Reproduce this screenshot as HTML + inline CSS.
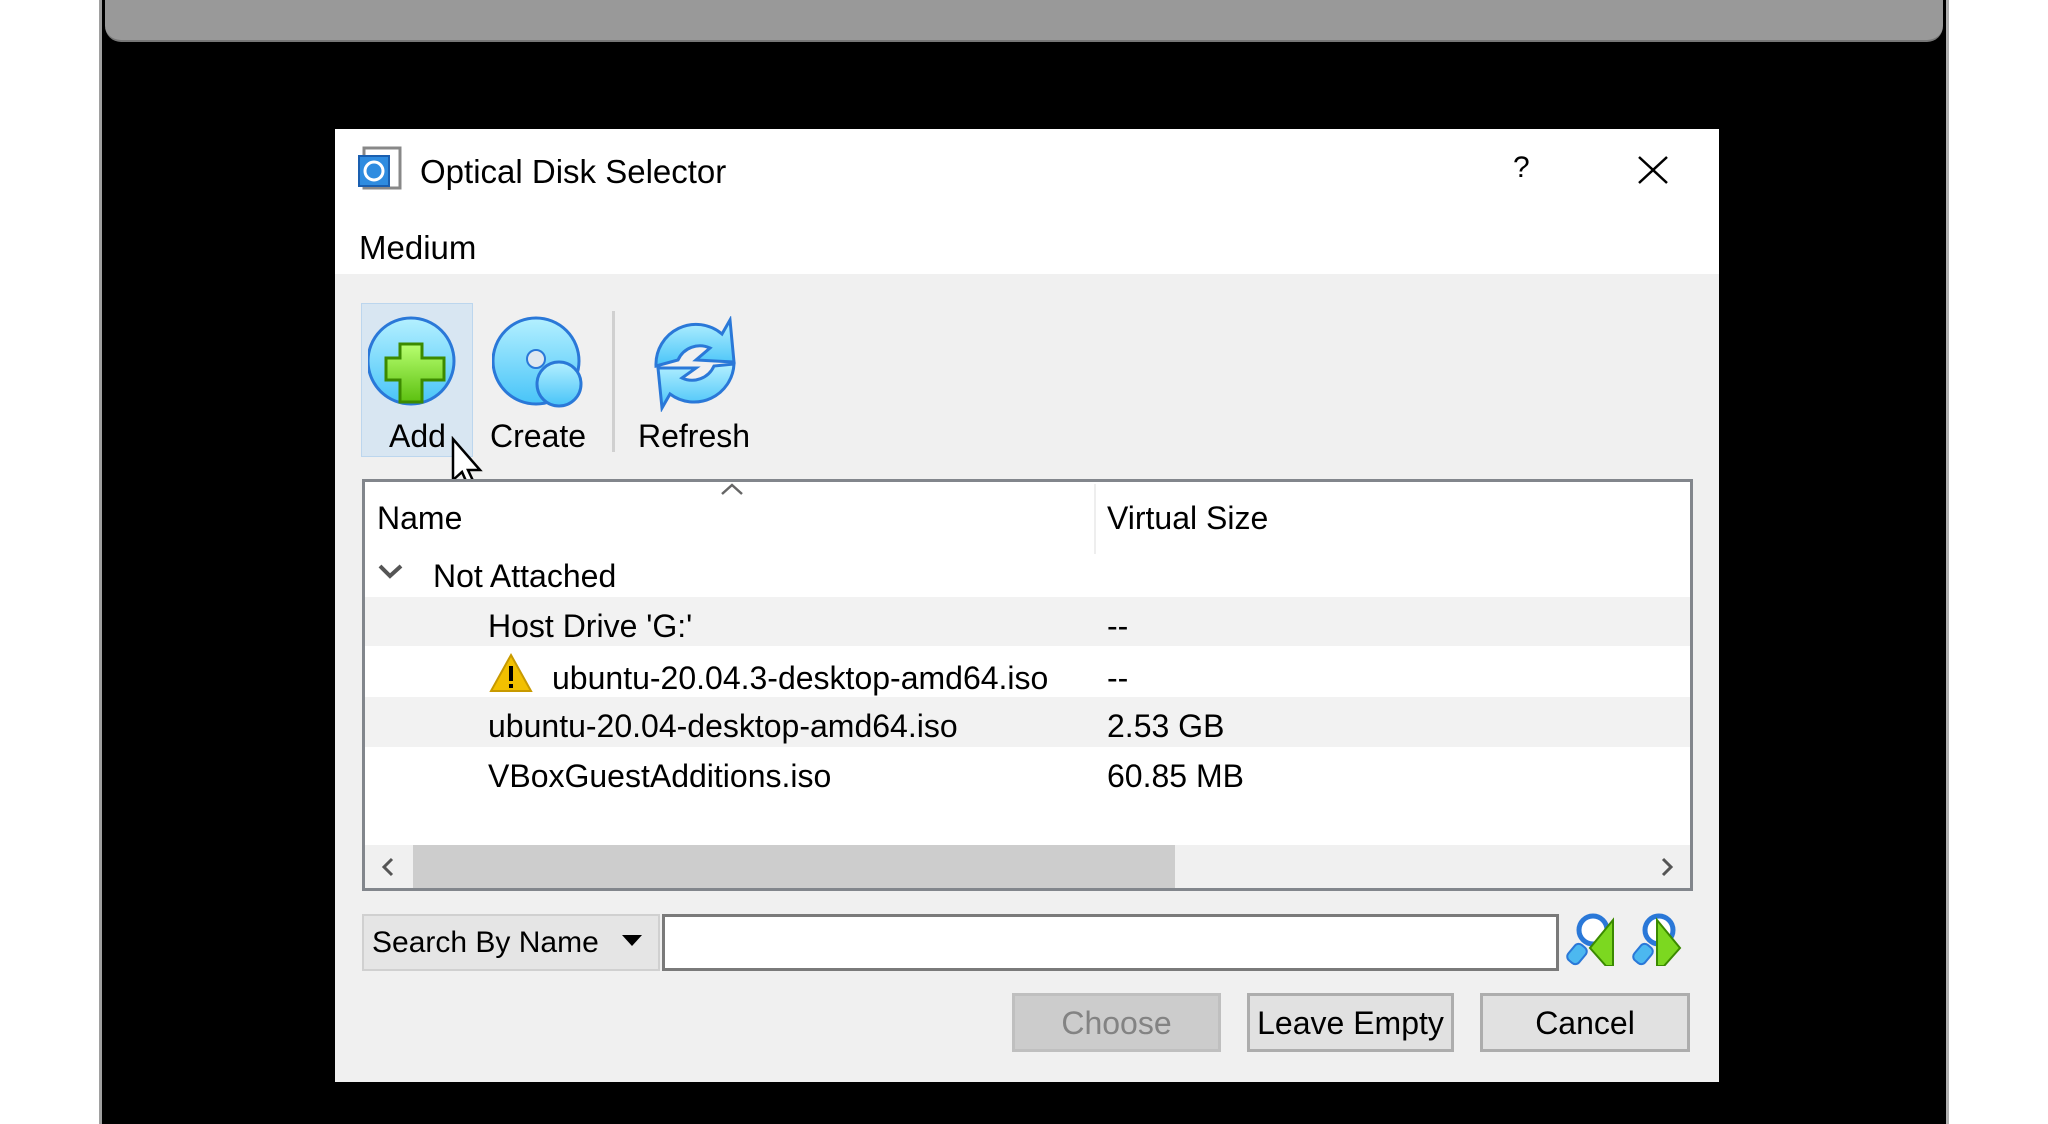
<!DOCTYPE html>
<html><head><meta charset="utf-8"><style>
*{margin:0;padding:0;box-sizing:border-box}
body{width:2048px;height:1124px;background:#fff;position:relative;overflow:hidden;font-family:"Liberation Sans",sans-serif;color:#000}
.a{position:absolute}
.t{position:absolute;font-size:32px;white-space:nowrap;line-height:1}
</style></head><body>
<div class="a" style="left:99px;top:0;width:1850px;height:1124px;background:#000"></div>
<div class="a" style="left:99px;top:0;width:3px;height:1124px;background:#a0a0a0"></div>
<div class="a" style="left:1946px;top:0;width:3px;height:1124px;background:#b0b0b0"></div>
<div class="a" style="left:105px;top:0;width:1838px;height:42px;background:#999;border-bottom:2px solid #777;border-radius:0 0 16px 16px"></div>

<!-- dialog -->
<div class="a" style="left:335px;top:129px;width:1384px;height:953px;background:#f0f0f0"></div>
<div class="a" style="left:335px;top:129px;width:1384px;height:145px;background:#fff"></div>
<svg class="a" style="left:357px;top:146px" width="46" height="46" viewBox="0 0 46 46">
<rect x="7" y="2" width="36" height="40" fill="#fff" stroke="#888" stroke-width="3"/>
<rect x="2" y="10" width="30" height="30" fill="#2f8ce0" stroke="#1a5fb0" stroke-width="2"/>
<circle cx="17" cy="25" r="9" fill="none" stroke="#fff" stroke-width="3"/></svg>
<div class="t" style="left:420px;top:155px;font-size:33px">Optical Disk Selector</div>
<div class="t" style="left:1513px;top:153px;font-size:30px">?</div>
<svg class="a" style="left:1637px;top:155px" width="32" height="30"><path d="M2 2L30 28M30 2L2 28" stroke="#000" stroke-width="2.5"/></svg>
<div class="t" style="left:359px;top:231px;font-size:33px">Medium</div>

<!-- toolbar -->
<div class="a" style="left:361px;top:303px;width:112px;height:154px;background:#d8e6f2;border:1px solid #bcd6ee"></div>
<svg class="a" style="left:368px;top:316px" width="100" height="96" viewBox="0 0 100 96">
<defs><linearGradient id="g" x1="0" y1="0" x2="0" y2="1"><stop offset="0" stop-color="#b4f0ff"/><stop offset="1" stop-color="#48c4f8"/></linearGradient>
<linearGradient id="gg" x1="0" y1="0" x2="0" y2="1"><stop offset="0" stop-color="#b8ff70"/><stop offset="1" stop-color="#5cc010"/></linearGradient></defs>
<ellipse cx="43" cy="45" rx="43" ry="43" fill="url(#g)" stroke="#2a78d8" stroke-width="3"/>
<path d="M50 58h22v-22h-22v-14h-22v14h-14v22h14v22h22z" transform="translate(4 6)" fill="url(#gg)" stroke="#3c8a00" stroke-width="3"/>
</svg>
<svg class="a" style="left:492px;top:316px" width="96" height="96" viewBox="0 0 96 96">
<ellipse cx="44" cy="45" rx="43" ry="43" fill="url(#g)" stroke="#2a78d8" stroke-width="3"/>
<circle cx="44" cy="43" r="9" fill="#e0e8f0" stroke="#2a78d8" stroke-width="2"/>
<circle cx="67" cy="68" r="22" fill="url(#g)" stroke="#2a78d8" stroke-width="3"/>
</svg>
<div class="a" style="left:612px;top:311px;width:3px;height:141px;background:#d0d0d0"></div>
<svg class="a" style="left:652px;top:316px" width="90" height="96" viewBox="0 0 90 96">
<path d="M4 50 A40 40 0 0 1 70 18 L78 4 L82 46 L44 44 L58 32 A24 24 0 0 0 26 44 Z" fill="url(#g)" stroke="#2a78d8" stroke-width="3"/>
<path d="M82 48 A40 40 0 0 1 18 78 L10 92 L6 52 L44 52 L30 62 A24 24 0 0 0 62 50 Z" fill="url(#g)" stroke="#2a78d8" stroke-width="3"/>
</svg>
<div class="t" style="left:389px;top:420px">Add</div>
<div class="t" style="left:490px;top:420px">Create</div>
<div class="t" style="left:638px;top:420px">Refresh</div>
<svg class="a" style="left:450px;top:436px" width="40" height="60"><path d="M3 3V44L12 36L20 54L26 51L18 34H30Z" fill="#fff" stroke="#000" stroke-width="2.5"/></svg>

<!-- list -->
<div class="a" style="left:362px;top:479px;width:1331px;height:412px;background:#fff;border:3px solid #82868c"></div>
<svg class="a" style="left:719px;top:481px" width="26" height="16"><path d="M3 13L13 4L23 13" fill="none" stroke="#666" stroke-width="2.5"/></svg>
<div class="t" style="left:377px;top:502px">Name</div>
<div class="a" style="left:1094px;top:484px;width:2px;height:70px;background:#eee"></div>
<div class="t" style="left:1107px;top:502px">Virtual Size</div>
<svg class="a" style="left:377px;top:562px" width="28" height="20"><path d="M3 4L13 14L24 4" fill="none" stroke="#555" stroke-width="4"/></svg>
<div class="t" style="left:433px;top:560px">Not Attached</div>
<div class="a" style="left:365px;top:597px;width:1325px;height:49px;background:#f2f2f2"></div>
<div class="a" style="left:365px;top:697px;width:1325px;height:50px;background:#f2f2f2"></div>
<div class="t" style="left:488px;top:610px">Host Drive 'G:'</div>
<div class="t" style="left:1107px;top:610px">--</div>
<svg class="a" style="left:488px;top:652px" width="46" height="42"><path d="M23 3L43 39H3Z" fill="#f2c000" stroke="#c89a00" stroke-width="2"/><rect x="21" y="14" width="4" height="15" fill="#000"/><rect x="21" y="32" width="4" height="4" fill="#000"/></svg>
<div class="t" style="left:552px;top:662px">ubuntu-20.04.3-desktop-amd64.iso</div>
<div class="t" style="left:1107px;top:662px">--</div>
<div class="t" style="left:488px;top:710px">ubuntu-20.04-desktop-amd64.iso</div>
<div class="t" style="left:1107px;top:710px">2.53 GB</div>
<div class="t" style="left:488px;top:760px">VBoxGuestAdditions.iso</div>
<div class="t" style="left:1107px;top:760px">60.85 MB</div>
<div class="a" style="left:365px;top:845px;width:1325px;height:43px;background:#f0f0f0"></div>
<div class="a" style="left:413px;top:845px;width:762px;height:43px;background:#cdcdcd"></div>
<svg class="a" style="left:378px;top:856px" width="20" height="22"><path d="M14 3L6 11L14 19" fill="none" stroke="#555" stroke-width="3"/></svg>
<svg class="a" style="left:1657px;top:856px" width="20" height="22"><path d="M6 3L14 11L6 19" fill="none" stroke="#555" stroke-width="3"/></svg>

<!-- search -->
<div class="a" style="left:362px;top:914px;width:298px;height:57px;background:#e5e5e5;border:2px solid #d0d0d0"></div>
<div class="t" style="left:372px;top:928px;font-size:30px">Search By Name</div>
<svg class="a" style="left:621px;top:934px" width="22" height="14"><path d="M1 1H21L11 12Z" fill="#000"/></svg>
<div class="a" style="left:662px;top:914px;width:897px;height:57px;background:#fff;border:3px solid #7a7a7a"></div>
<svg class="a" style="left:1566px;top:906px" width="130" height="60" viewBox="0 0 130 60">
<circle cx="27" cy="24" r="14" fill="#fff" stroke="#2a78d8" stroke-width="5"/>
<rect x="4" y="38" width="14" height="20" rx="5" transform="rotate(40 11 48)" fill="#4cb8f0" stroke="#2a78d8" stroke-width="2"/>
<path d="M47 14V60H40L24 42Z" fill="#7cd820" stroke="#3a8a00" stroke-width="2"/>
<circle cx="93" cy="24" r="14" fill="#fff" stroke="#2a78d8" stroke-width="5"/>
<rect x="70" y="38" width="14" height="20" rx="5" transform="rotate(40 77 48)" fill="#4cb8f0" stroke="#2a78d8" stroke-width="2"/>
<path d="M91 14V60H98L114 42Z" fill="#7cd820" stroke="#3a8a00" stroke-width="2"/>
</svg>

<!-- buttons -->
<div class="a" style="left:1012px;top:993px;width:209px;height:59px;background:#ccc;border:3px solid #bfbfbf"></div>
<div class="t" style="left:1012px;top:1007px;width:209px;text-align:center;color:#838383">Choose</div>
<div class="a" style="left:1247px;top:993px;width:207px;height:59px;background:#e1e1e1;border:3px solid #adadad"></div>
<div class="t" style="left:1247px;top:1007px;width:207px;text-align:center">Leave Empty</div>
<div class="a" style="left:1480px;top:993px;width:210px;height:59px;background:#e1e1e1;border:3px solid #adadad"></div>
<div class="t" style="left:1480px;top:1007px;width:210px;text-align:center">Cancel</div>
</body></html>
